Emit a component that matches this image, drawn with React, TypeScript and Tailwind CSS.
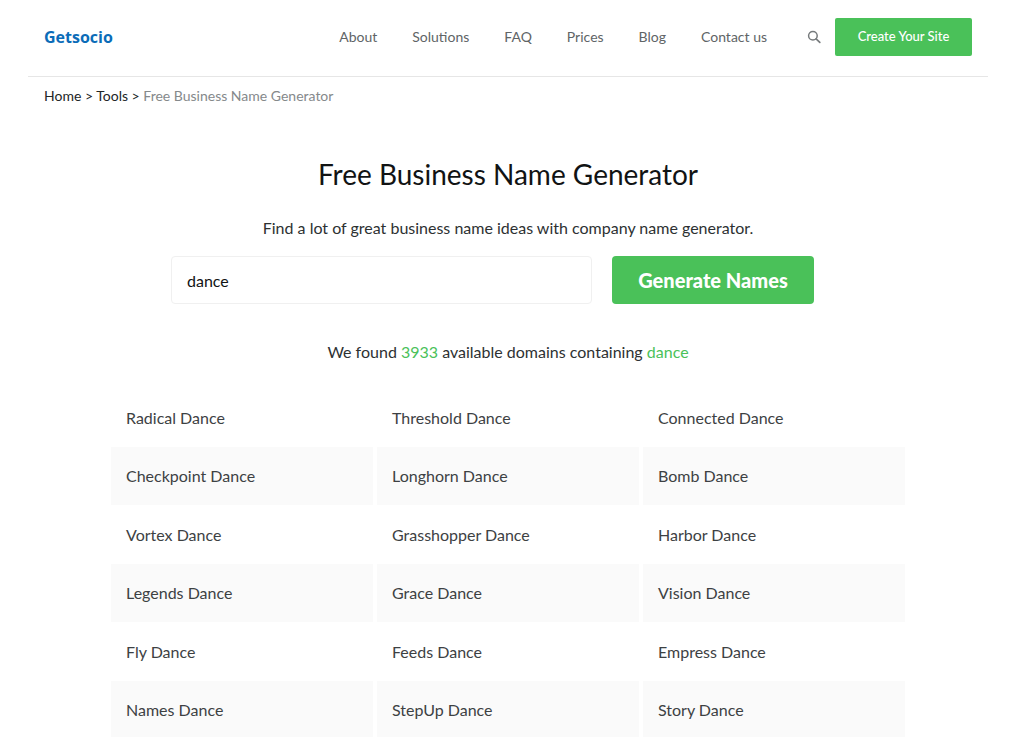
import { useState } from 'react';

const navLinks = ['About', 'Solutions', 'FAQ', 'Prices', 'Blog', 'Contact us'];

const names = [
  ['Radical Dance', 'Threshold Dance', 'Connected Dance'],
  ['Checkpoint Dance', 'Longhorn Dance', 'Bomb Dance'],
  ['Vortex Dance', 'Grasshopper Dance', 'Harbor Dance'],
  ['Legends Dance', 'Grace Dance', 'Vision Dance'],
  ['Fly Dance', 'Feeds Dance', 'Empress Dance'],
  ['Names Dance', 'StepUp Dance', 'Story Dance'],
];

function SearchIcon() {
  return (
    <svg viewBox="0 0 14 14" className="w-3.5 h-3.5" fill="none" stroke="currentColor">
      <circle cx="5.9" cy="5.7" r="4.3" strokeWidth="1.5" />
      <path d="M9.1 8.9 L12.8 12.3" strokeWidth="1.7" strokeLinecap="round" />
    </svg>
  );
}

function Header() {
  return (
    <header className="flex items-center justify-between h-[77px] pb-0.5 px-4 border-b border-[#e6e6e6]">
      <a
        href="#"
        className="font-['Open_Sans','Noto_Sans',sans-serif] font-bold text-base leading-6 text-[#0b6cb8]"
      >
        Getsocio
      </a>
      <div className="flex items-center">
        <nav className="flex items-center gap-[35px] text-sm text-[#606466]">
          {navLinks.map((label) => (
            <a key={label} href="#" className="whitespace-nowrap">
              {label}
            </a>
          ))}
        </nav>
        <button type="button" aria-label="Search" className="ml-10 mr-3.5 text-[#777b7d]">
          <SearchIcon />
        </button>
        <button
          type="button"
          className="w-[137px] h-[38px] rounded-xs bg-[#4ac159] text-white text-[13px] font-medium whitespace-nowrap"
        >
          Create Your Site
        </button>
      </div>
    </header>
  );
}

function Breadcrumbs() {
  return (
    <nav aria-label="Breadcrumb" className="px-4 pt-[7px] text-sm leading-6 text-[#222627]">
      <a href="#">Home</a> &gt; <a href="#">Tools</a> &gt;{' '}
      <span className="text-[#85898b]">Free Business Name Generator</span>
    </nav>
  );
}

export default function App() {
  const [keyword, setKeyword] = useState('dance');

  return (
    <div className="bg-white pl-7 pr-9 font-['Lato','Liberation_Sans',sans-serif] text-[#2d3132]">
      <Header />
      <Breadcrumbs />

      <main className="flex flex-col items-center">
        <h1 className="mt-[46px] text-[28px] leading-10 text-[#111314]">
          Free Business Name Generator
        </h1>
        <p className="mt-[22px] text-base leading-6">
          Find a lot of great business name ideas with company name generator.
        </p>

        <form
          className="mt-4 flex gap-5 w-full max-w-[674px]"
          onSubmit={(e) => e.preventDefault()}
        >
          <input
            type="text"
            aria-label="Keyword"
            value={keyword}
            onChange={(e) => setKeyword(e.target.value)}
            className="w-[421px] h-12 px-[15px] border border-[#f0f0f0] rounded text-base text-[#111314] outline-none"
          />
          <button
            type="submit"
            className="w-[202px] h-12 rounded bg-[#4ac159] text-white text-xl font-black whitespace-nowrap"
          >
            Generate Names
          </button>
        </form>

        <p className="mt-9 text-base leading-6">
          We found <span className="text-[#4ac159]">3933</span> available domains containing{' '}
          <span className="text-[#4ac159]">dance</span>
        </p>

        <table className="mt-6 w-full max-w-[802px] table-fixed border-separate border-spacing-x-1 border-spacing-y-0 text-base text-[#3d4143]">
          <tbody>
            {names.map((row) => (
              <tr key={row[0]} className="group h-[59px] even:h-[58px]">
                {row.map((name) => (
                  <td key={name} className="px-[15px] group-even:bg-[#fafafa]">
                    {name}
                  </td>
                ))}
              </tr>
            ))}
          </tbody>
        </table>
      </main>
    </div>
  );
}
